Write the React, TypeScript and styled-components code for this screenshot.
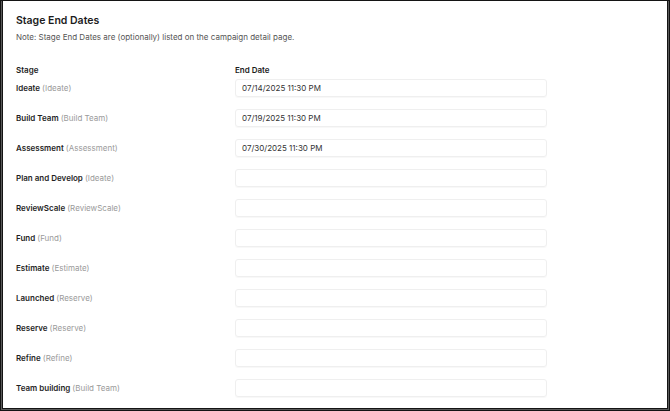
import React from "react";
import styled, { createGlobalStyle } from "styled-components";

const Global = createGlobalStyle`
  html, body { margin: 0; padding: 0; background: #ffffff; }
  body { font-family: Inter, "Noto Sans", sans-serif; -webkit-font-smoothing: antialiased; }
  * { box-sizing: border-box; }
`;

const Frame = styled.div`
  width: 670px;
  height: 411px;
  border: 1px solid #141414;
  padding: 0 1px 1px 1px;
  background: #5a5a5a;
  display: flex;
`;

const Inner = styled.div`
  flex: 1;
  border: 1px solid #141414;
  border-top: none;
  background: #ffffff;
  padding: 13px 0 0 13px;
  overflow: hidden;
`;

const Title = styled.h2`
  margin: 0;
  font-size: 10.5px;
  line-height: 14px;
  font-weight: 600;
  color: #1c1c1c;
`;

const Note = styled.p`
  margin: 4px 0 0 0;
  font-size: 8px;
  line-height: 10px;
  color: #555555;
`;

const Table = styled.div`
  margin-top: 23px;
  display: grid;
  grid-template-columns: 219px 312px;
  row-gap: 12px;
  align-items: center;
`;

const HeadCell = styled.div`
  font-size: 8px;
  line-height: 10px;
  font-weight: 600;
  color: #1c1c1c;
  margin-bottom: -8px;
`;

const StageLabel = styled.div`
  font-size: 8px;
  line-height: 10px;
  font-weight: 600;
  color: #1f1f1f;
  white-space: nowrap;
`;

const Alias = styled.span`
  font-weight: 400;
  color: #9a9a9a;
`;

const DateInput = styled.div`
  height: 18px;
  border: 1px solid #efefef;
  border-radius: 3px;
  box-shadow: 0 1px 1px rgba(0, 0, 0, 0.03);
  padding: 0 6px;
  display: flex;
  align-items: center;
  font-size: 8px;
  color: #333333;
`;

const stages: { name: string; alias: string; date: string }[] = [
  { name: "Ideate", alias: "Ideate", date: "07/14/2025 11:30 PM" },
  { name: "Build Team", alias: "Build Team", date: "07/19/2025 11:30 PM" },
  { name: "Assessment", alias: "Assessment", date: "07/30/2025 11:30 PM" },
  { name: "Plan and Develop", alias: "Ideate", date: "" },
  { name: "ReviewScale", alias: "ReviewScale", date: "" },
  { name: "Fund", alias: "Fund", date: "" },
  { name: "Estimate", alias: "Estimate", date: "" },
  { name: "Launched", alias: "Reserve", date: "" },
  { name: "Reserve", alias: "Reserve", date: "" },
  { name: "Refine", alias: "Refine", date: "" },
  { name: "Team building", alias: "Build Team", date: "" },
];

export default function App() {
  return (
    <>
      <Global />
      <Frame>
        <Inner>
          <Title>Stage End Dates</Title>
          <Note>Note: Stage End Dates are (optionally) listed on the campaign detail page.</Note>
          <Table>
            <HeadCell>Stage</HeadCell>
            <HeadCell>End Date</HeadCell>
            {stages.map((s) => (
              <React.Fragment key={s.name}>
                <StageLabel>
                  {s.name} <Alias>({s.alias})</Alias>
                </StageLabel>
                <DateInput>{s.date}</DateInput>
              </React.Fragment>
            ))}
          </Table>
        </Inner>
      </Frame>
    </>
  );
}
